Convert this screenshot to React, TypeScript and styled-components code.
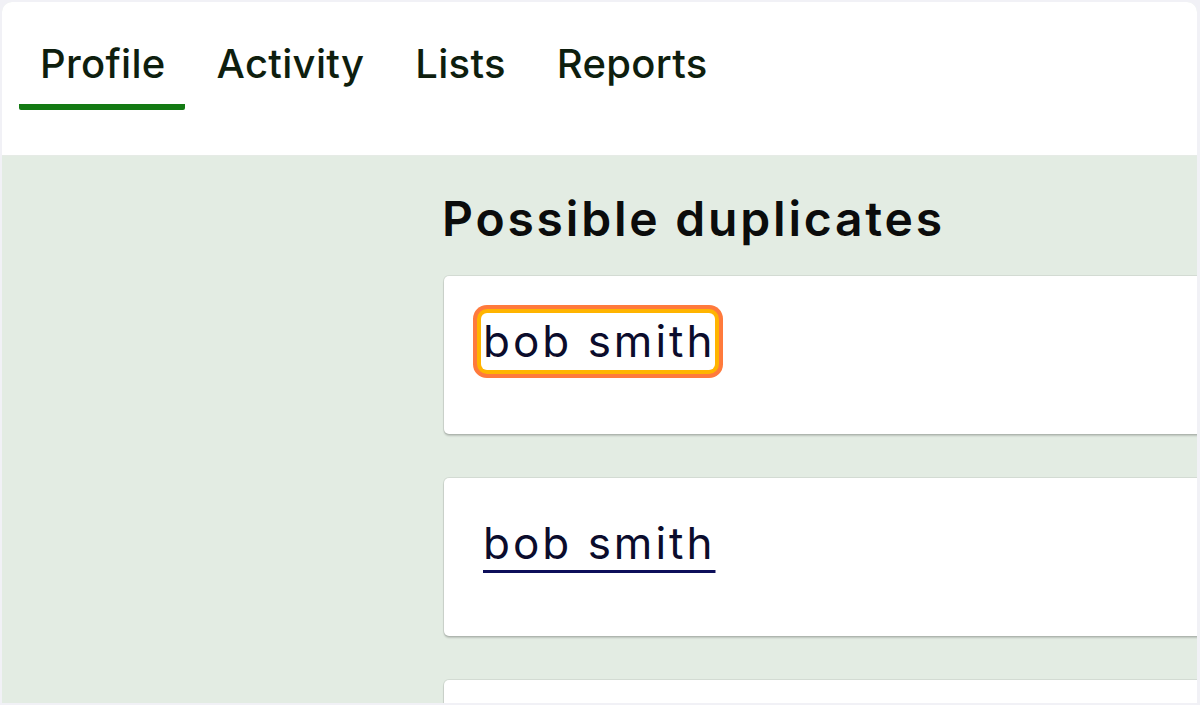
import { FC } from "react";
import styled, { createGlobalStyle } from "styled-components";

const GlobalStyle = createGlobalStyle`
  html, body {
    margin: 0;
    padding: 0;
    background: #f1f1f6;
    font-family: Inter, "Noto Sans", sans-serif;
  }
  * { box-sizing: border-box; }
`;

const Frame = styled.div`
  margin: 2px 3px 0 2px;
  height: 701px;
  background: #e3ece3;
  border-radius: 10px 10px 0 0;
  overflow: hidden;
  display: flex;
  flex-direction: column;
`;

const Nav = styled.nav`
  background: #ffffff;
  display: flex;
  gap: 11px;
  padding: 38px 0 45px 17px;
  border-bottom: 1px solid #e6ebe6;
`;

const Tab = styled.a<{ $active?: boolean }>`
  display: block;
  padding: 0 19px 16px 21px;
  font-size: 40px;
  line-height: 48px;
  font-weight: 500;
  letter-spacing: 0.3px;
  color: #0e1e0e;
  text-decoration: none;
  border-bottom: 6px solid ${(p) => (p.$active ? "#137a13" : "transparent")};
  border-radius: 2px;
`;

const Main = styled.main`
  display: grid;
  grid-template-columns: 442px 900px;
  padding-top: 34px;
`;

const Content = styled.section`
  grid-column: 2;
  display: flex;
  flex-direction: column;
  gap: 44px;
`;

const Heading = styled.h1`
  margin: 0 0 -16px -2px;
  font-size: 48px;
  line-height: 58px;
  font-weight: 600;
  letter-spacing: 2.8px;
  color: #0b0c0c;
`;

const Card = styled.div`
  background: #ffffff;
  border-radius: 5px;
  padding: 37px 39px 64px 37px;
  min-height: 158px;
  box-shadow: 0 2px 2px rgba(0, 0, 0, 0.18), 0 0 0 1px rgba(0, 0, 0, 0.07);
`;

const NameLink = styled.a<{ $focused?: boolean }>`
  display: inline-block;
  padding: 0 0 0 2px;
  font-size: 44px;
  line-height: 57px;
  font-weight: 400;
  letter-spacing: 3px;
  color: #0b0c2c;
  text-decoration: ${(p) => (p.$focused ? "none" : "underline")};
  text-decoration-color: #0d0f5a;
  text-decoration-thickness: 3px;
  text-underline-offset: 11px;
  border-radius: 6px;
  background: #ffffff;
  box-shadow: ${(p) =>
    p.$focused ? "0 0 0 4px #ffb400, 0 0 0 8px #ff7a3c" : "none"};
`;

const names = [
  { name: "bob smith", focused: true },
  { name: "bob smith", focused: false },
  { name: "bob smith", focused: false },
];

const App: FC = () => {
  return (
    <>
      <GlobalStyle />
      <Frame>
        <Nav>
          <Tab $active>Profile</Tab>
          <Tab>Activity</Tab>
          <Tab>Lists</Tab>
          <Tab>Reports</Tab>
        </Nav>
        <Main>
          <Content>
            <Heading>Possible duplicates</Heading>
            {names.map((n, i) => (
              <Card key={i}>
                <NameLink href="#" $focused={n.focused}>
                  {n.name}
                </NameLink>
              </Card>
            ))}
          </Content>
        </Main>
      </Frame>
    </>
  );
};

export default App;
